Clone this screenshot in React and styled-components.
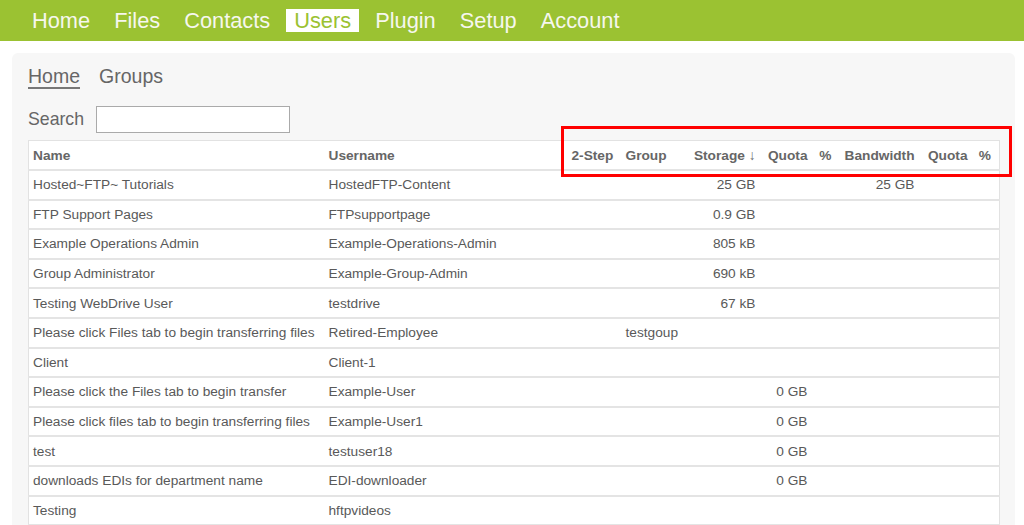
import React from 'react'
import styled, { createGlobalStyle } from 'styled-components'

const GlobalStyle = createGlobalStyle`
    body {
        margin: 0;
        background: #fff;
        font-family: "Liberation Sans", Arial, sans-serif;
        color: #555;
    }
`;

const navItems = ['Home', 'Files', 'Contacts', 'Users', 'Plugin', 'Setup', 'Account'];

const columns = [
    { key: 'name', label: 'Name', width: 296 },
    { key: 'user', label: 'Username', width: 243 },
    { key: 'twostep', label: '2-Step', width: 54 },
    { key: 'group', label: 'Group', width: 63 },
    { key: 'storage', label: 'Storage \u2193', width: 76, right: true },
    { key: 'quota', label: 'Quota', width: 52, right: true },
    { key: 'pct', label: '%', width: 24, right: true },
    { key: 'bw', label: 'Bandwidth', width: 83, right: true },
    { key: 'bwquota', label: 'Quota', width: 53, right: true },
    { key: 'bwpct', label: '%', width: 27, right: true, last: true },
];

const users = [
    { name: 'Hosted~FTP~ Tutorials', user: 'HostedFTP-Content', storage: '25 GB', bw: '25 GB' },
    { name: 'FTP Support Pages', user: 'FTPsupportpage', storage: '0.9 GB' },
    { name: 'Example Operations Admin', user: 'Example-Operations-Admin', storage: '805 kB' },
    { name: 'Group Administrator', user: 'Example-Group-Admin', storage: '690 kB' },
    { name: 'Testing WebDrive User', user: 'testdrive', storage: '67 kB' },
    { name: 'Please click Files tab to begin transferring files', user: 'Retired-Employee', group: 'testgoup' },
    { name: 'Client', user: 'Client-1' },
    { name: 'Please click the Files tab to begin transfer', user: 'Example-User', quota: '0 GB' },
    { name: 'Please click files tab to begin transferring files', user: 'Example-User1', quota: '0 GB' },
    { name: 'test', user: 'testuser18', quota: '0 GB' },
    { name: 'downloads EDIs for department name', user: 'EDI-downloader', quota: '0 GB' },
    { name: 'Testing', user: 'hftpvideos' },
];

function App() {
    return (
        <>
            <GlobalStyle />
            <TopBar>
                {navItems.map((item) => (
                    <NavLink key={item} active={item === 'Users'}>{item}</NavLink>
                ))}
            </TopBar>
            <Panel>
                <Tabs>
                    <Tab active>Home</Tab>
                    <Tab>Groups</Tab>
                </Tabs>
                <SearchRow>
                    <SearchLabel>Search</SearchLabel>
                    <SearchInput type="text" />
                </SearchRow>
                <UserTable>
                    <colgroup>
                        {columns.map((c) => <col key={c.key} style={{ width: c.width }} />)}
                    </colgroup>
                    <thead>
                        <tr>
                            {columns.map((c) => (
                                <Th key={c.key} right={c.right} last={c.last}>{c.label}</Th>
                            ))}
                        </tr>
                    </thead>
                    <tbody>
                        {users.map((u, i) => (
                            <tr key={i}>
                                {columns.map((c) => (
                                    <Td key={c.key} right={c.right} last={c.last}>{u[c.key] || ''}</Td>
                                ))}
                            </tr>
                        ))}
                    </tbody>
                </UserTable>
                <Highlight />
            </Panel>
        </>
    )
}

export default App

const TopBar = styled.div`
    height: 41px;
    background: #9bc232;
    display: flex;
    align-items: center;
    padding-left: 24px;
    gap: 8px;
`;

const NavLink = styled.a`
    font-size: 21.8px;
    line-height: 23px;
    padding: 0 8px;
    color: ${props => props.active ? '#9bc232' : '#f6f7ee'};
    background: ${props => props.active ? '#fff' : 'transparent'};
    cursor: pointer;
`;

const Panel = styled.div`
    position: relative;
    margin: 12px 9px 0 12px;
    padding: 12px 15px 0 16px;
    background: #f7f7f7;
    border-radius: 6px 6px 0 0;
`;

const Tabs = styled.div`
    display: flex;
    gap: 19px;
`;

const Tab = styled.a`
    font-size: 19.5px;
    line-height: 22px;
    color: #666;
    border-bottom: 2px solid ${props => props.active ? '#777' : 'transparent'};
    cursor: pointer;
`;

const SearchRow = styled.div`
    display: flex;
    align-items: center;
    margin-top: 17px;
    gap: 12px;
`;

const SearchLabel = styled.label`
    font-size: 17.7px;
    color: #666;
`;

const SearchInput = styled.input`
    width: 194px;
    height: 27px;
    box-sizing: border-box;
    border: 1px solid #aaa;
    background: #fff;
    margin: 0;
`;

const UserTable = styled.table`
    margin-top: 7px;
    width: 971px;
    table-layout: fixed;
    border-collapse: collapse;
    background: #fff;
    border: 1px solid #e2e2e2;
    font-size: 13.7px;
`;

const Th = styled.th`
    height: 28px;
    padding: 0 ${props => props.last ? '8px' : '5px'} 0 4px;
    text-align: ${props => props.right ? 'right' : 'left'};
    font-weight: bold;
    color: #666;
    white-space: nowrap;
    border-bottom: 2px solid #e4e4e4;
`;

const Td = styled.td`
    height: 27.6px;
    padding: 0 ${props => props.last ? '8px' : '5px'} 0 4px;
    text-align: ${props => props.right ? 'right' : 'left'};
    color: #595959;
    white-space: nowrap;
    border-bottom: 2px solid #e4e4e4;
`;

const Highlight = styled.div`
    position: absolute;
    left: 549px;
    top: 73px;
    width: 451px;
    height: 51px;
    box-sizing: border-box;
    border: 3.5px solid #ff0000;
    pointer-events: none;
`;
